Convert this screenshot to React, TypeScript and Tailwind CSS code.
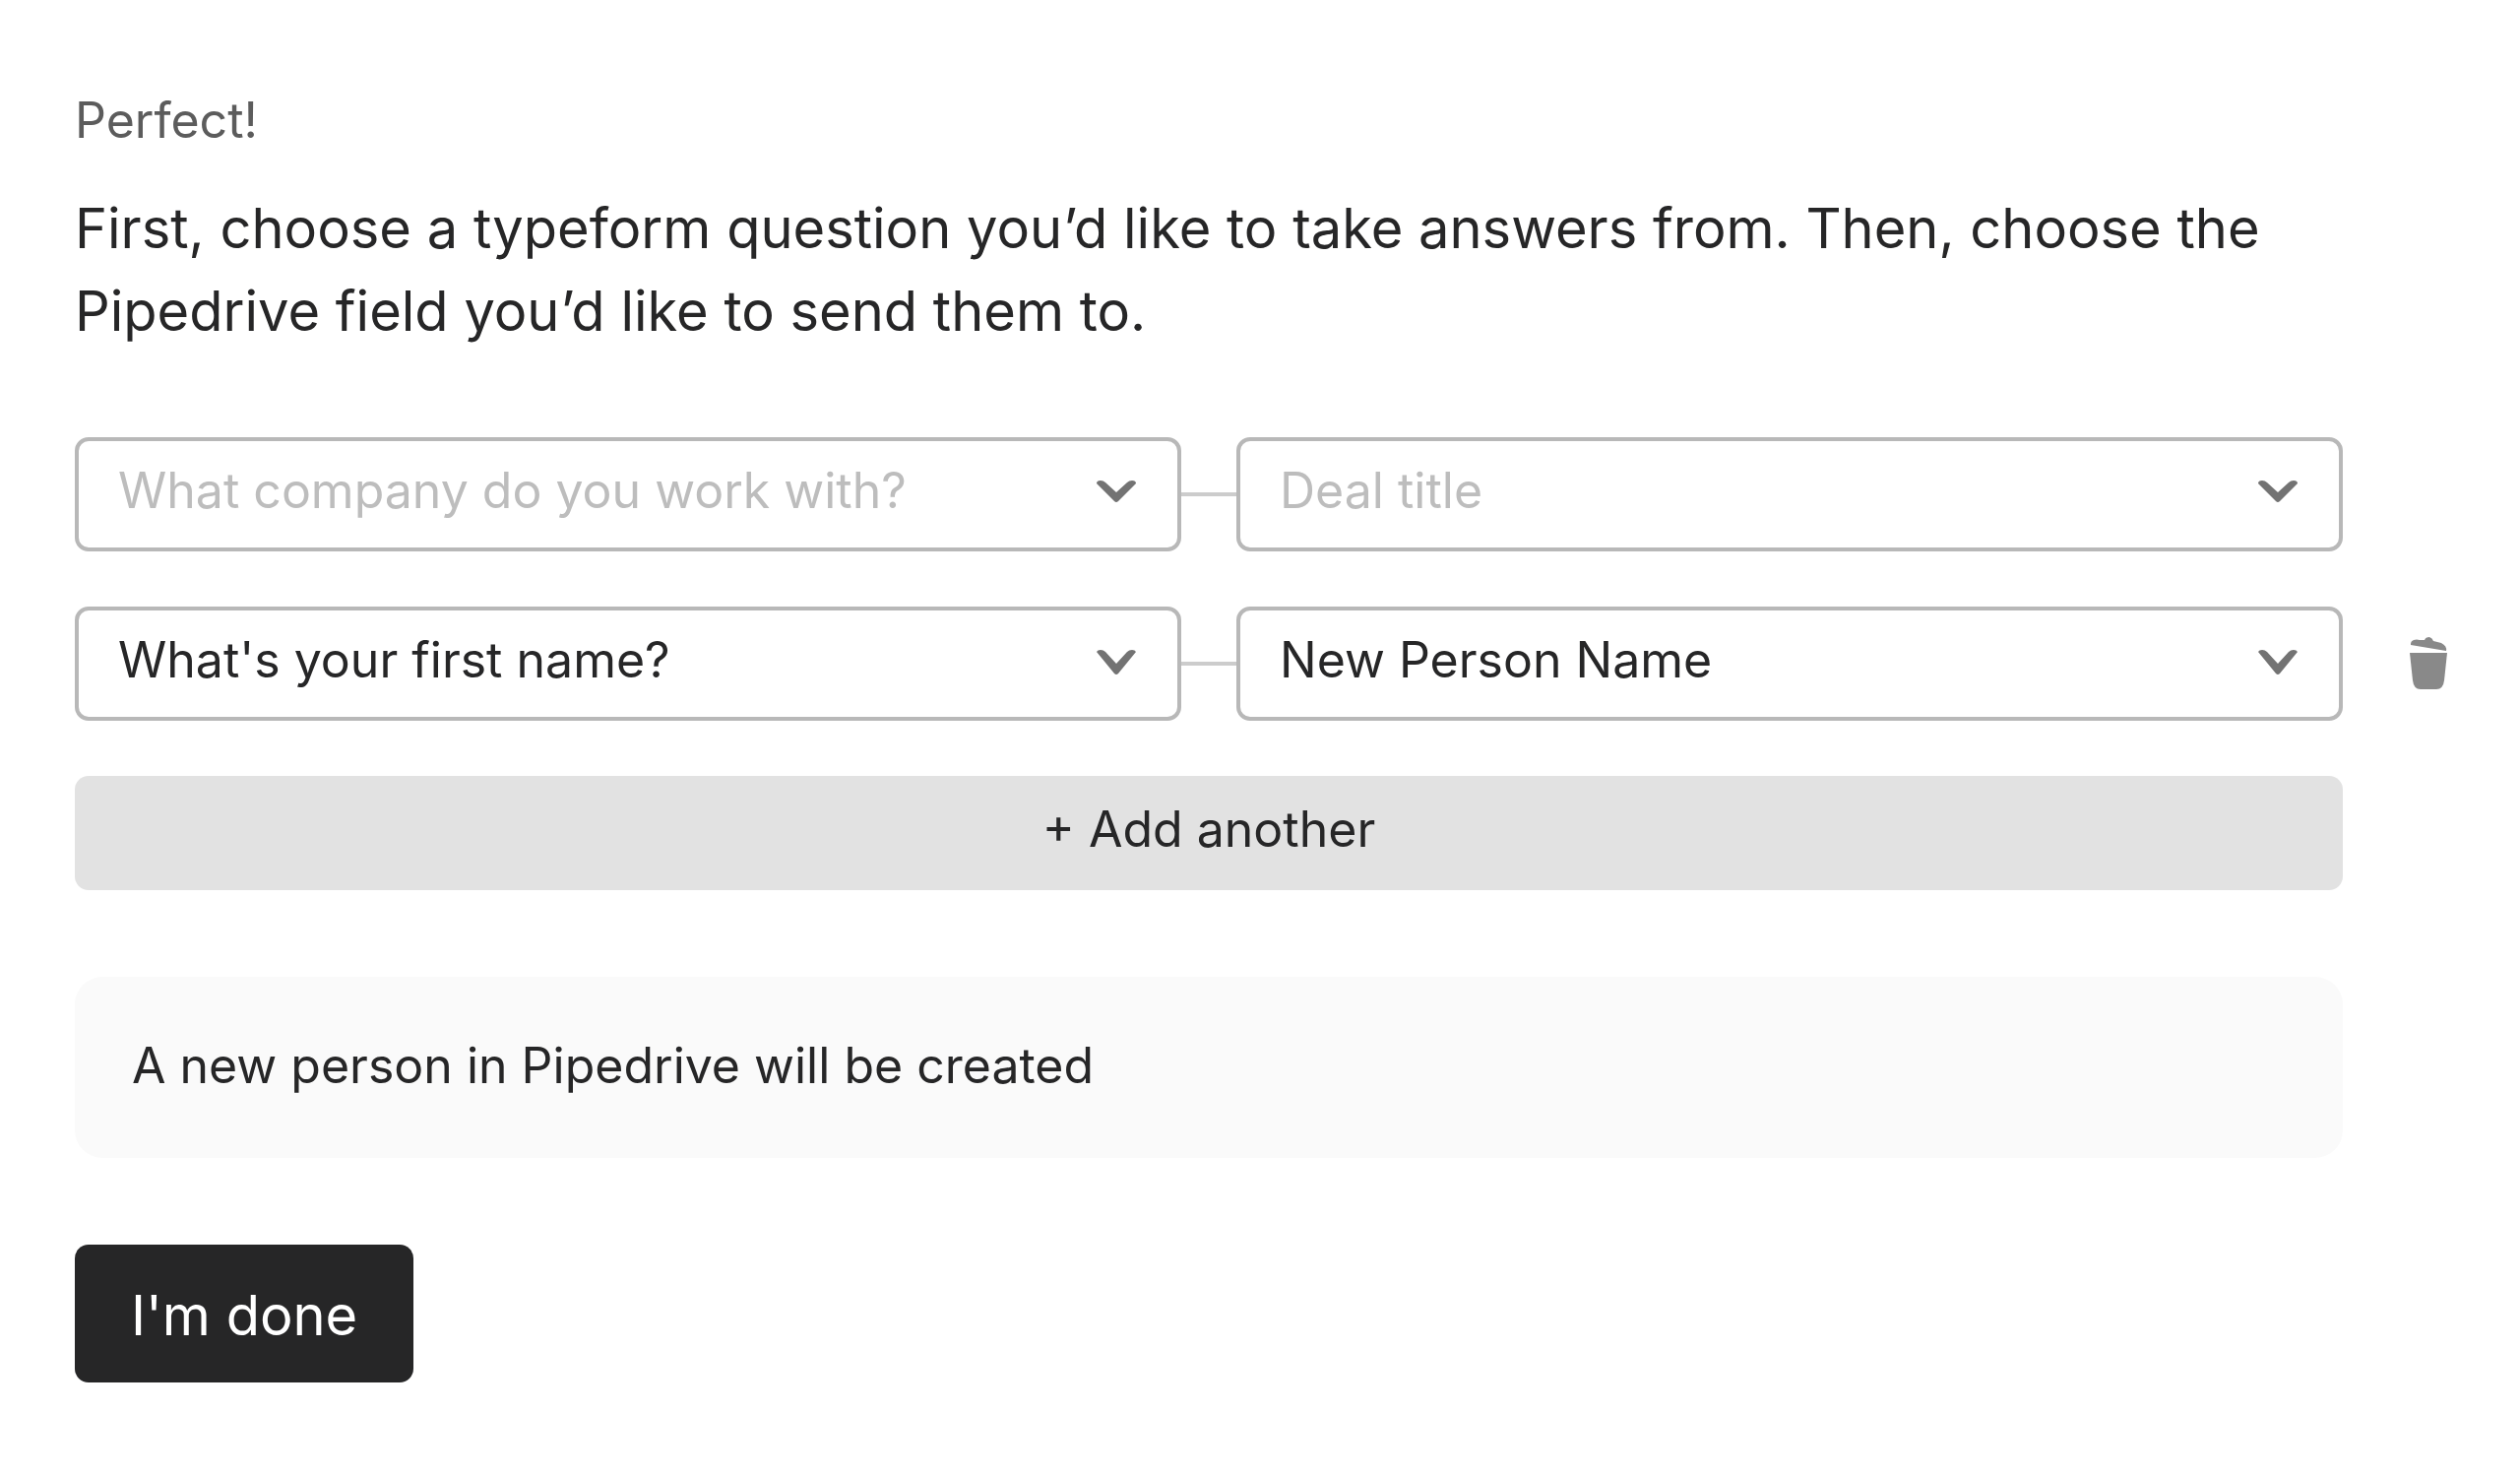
import type { ReactNode } from 'react';

interface Option {
  label: string;
  name: string;
  disabled?: boolean;
}

interface Mapping {
  question: Option;
  field: Option;
  removable?: boolean;
}

const MAPPINGS: Mapping[] = [
  {
    question: { label: 'Typeform question 1', name: 'What company do you work with?', disabled: true },
    field: { label: 'Pipedrive field 1', name: 'Deal title', disabled: true },
  },
  {
    question: { label: 'Typeform question 2', name: "What's your first name?" },
    field: { label: 'Pipedrive field 2', name: 'New Person Name' },
    removable: true,
  },
];

function ChevronIcon({ flat }: { flat?: boolean }) {
  return (
    <svg
      viewBox="0 0 42 26"
      className="pointer-events-none absolute right-[45px] top-11 h-[26px] w-[42px]"
      fill="#737373"
    >
      {flat ? (
        <path d="M1 3 Q1 0 5 0 Q8 0 10 2 L21 12 L32 2 Q34 0 37 0 Q41 0 41 3 L23 21 Q21 23 19 21 Z" />
      ) : (
        <path d="M1 2 Q2 0 5 0 Q8 0 10 2 L21 14 L32 2 Q34 0 37 0 Q40 0 41 2 L23 24 Q21 26 19 24 Z" />
      )}
    </svg>
  );
}

function TrashIcon() {
  return (
    <svg viewBox="0 0 40 54" className="h-[54px] w-10" fill="#898989">
      <path d="M2 7 Q2 4 5 3 Q8 2 11 3 L16 3 Q17 0 21 0 Q24 1 25 4 L33 6 Q39 9 38 14 L2 8 Z" />
      <path d="M1 16 H39 L36 44 Q35 53 28 53 H12 Q5 53 4 44 Z" />
    </svg>
  );
}

function Dropdown({ label, name, disabled }: Option) {
  return (
    <div className="relative min-w-0 flex-1">
      <select
        aria-label={label}
        disabled={disabled}
        className={`block h-[116px] w-full appearance-none rounded-[14px] border-4 border-[#b8b8b8] bg-white pb-2 pl-10 pr-24 text-[50px] opacity-100 ${
          disabled ? 'text-[#bdbdbd]' : 'text-[#262627]'
        }`}
      >
        <option>{name}</option>
      </select>
      <ChevronIcon flat={disabled} />
    </div>
  );
}

function Row({ children, action }: { children: ReactNode; action?: ReactNode }) {
  return (
    <div className="flex items-center">
      <div className="flex min-w-0 flex-1 items-center">{children}</div>
      <div className="w-[180px] shrink-0 pl-[67px]">{action}</div>
    </div>
  );
}

export default function App() {
  return (
    <main className="bg-white pb-24 pl-[76px] pt-[90px] font-['Inter',sans-serif] text-[#262627]">
      <p className="text-[50px] leading-[64px] text-[#5c5c5c]">Perfect!</p>
      <h1 className="mt-9 pr-[180px] text-[56px] font-normal leading-[84px]">
        First, choose a typeform question you’d like to take answers from. Then, choose the Pipedrive
        field you’d like to send them to.
      </h1>

      <div className="mt-[86px] flex flex-col gap-14">
        {MAPPINGS.map(({ question, field, removable }) => (
          <Row
            key={question.name}
            action={
              removable && (
                <button type="button" aria-label="Remove" className="block">
                  <TrashIcon />
                </button>
              )
            }
          >
            <Dropdown {...question} />
            <span className="h-1 w-14 bg-[#cccccc]" />
            <Dropdown {...field} />
          </Row>
        ))}
        <Row>
          <button type="button" className="h-[116px] w-full rounded-[14px] bg-[#e2e2e2] pb-2 text-[50px]">
            + Add another
          </button>
        </Row>
      </div>

      <div className="mt-[88px]">
        <Row>
          <p className="w-full rounded-[28px] bg-[#fafafa] px-[58px] pb-[62px] pt-[58px] text-[50px] leading-[64px]">
            A new person in Pipedrive will be created
          </p>
        </Row>
      </div>

      <button
        type="button"
        className="mt-[88px] h-[140px] rounded-[14px] bg-[#262627] px-[57px] pt-1 text-[56px] text-white"
      >
        I'm done
      </button>
    </main>
  );
}
